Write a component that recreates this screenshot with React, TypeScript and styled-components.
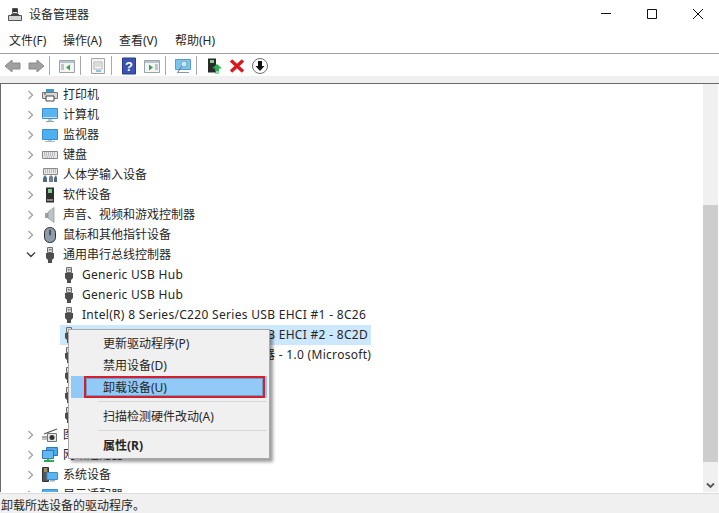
import React from "react";
import styled, { createGlobalStyle } from "styled-components";

const Global = createGlobalStyle`
  html, body { margin: 0; padding: 0; background: #fff; }
  body { font-family: "Noto Sans", "Noto Sans CJK SC", sans-serif; font-size: 12px; color: #262626; }
`;

const Win = styled.div`
  width: 719px; height: 513px; display: flex; flex-direction: column; overflow: hidden; background: #fff;
`;
const TitleBar = styled.div`
  height: 30px; flex: none; display: flex; align-items: center; padding-left: 7px;
`;
const TitleText = styled.span`
  margin-left: 6px; font-size: 12px; line-height: 16px; flex: 1;
`;
const Controls = styled.div`
  display: flex; margin-right: -2px; align-self: stretch;
`;
const Control = styled.div`
  width: 46px; display: flex; align-items: center; justify-content: center; padding-bottom: 2px;
`;
const MenuBar = styled.div`
  box-sizing: border-box; height: 24px; flex: none; border-bottom: 1px solid #a0a0a0; display: flex; align-items: center; padding-left: 9px; padding-bottom: 1px;
`;
const MenuLabel = styled.span`
  width: 56px; flex: none; line-height: 16px; white-space: nowrap; font-size: 12px;
  &:first-child { width: 54px; }
`;
const ToolBar = styled.div`
  height: 22px; flex: none; display: flex; align-items: center; padding-left: 1px; padding-top: 1px; box-sizing: border-box;
`;
const ToolBtn = styled.div`
  width: 23px; height: 21px; flex: none; display: flex; align-items: center; justify-content: center; padding-top: 1px; box-sizing: border-box;
`;
const ToolSep = styled.div`
  width: 8px; height: 19px; flex: none; box-sizing: border-box; padding-left: 2px;
  &::before { content: ""; display: block; width: 1px; height: 100%; background: #a8a8a8; }
`;
const Band = styled.div`
  height: 7px; flex: none; background: #f0f0f0;
`;
const Content = styled.div`
  position: relative; flex: none; height: 409px; display: flex; border-top: 1px solid #696969; border-left: 1px solid #696969; box-sizing: border-box;
`;
const Tree = styled.div`
  flex: 1; overflow: hidden; min-width: 0; padding-top: 1px;
`;
const Row = styled.div<{ $level: number }>`
  height: 20px; display: flex; align-items: center; white-space: nowrap;
  padding-left: ${p => (p.$level === 0 ? 23 : 59)}px;
`;
const Chevron = styled.span`
  width: 14px; height: 14px; flex: none; display: flex; align-items: center; justify-content: center; margin-right: 3px;
`;
const RowBody = styled.div<{ $selected?: boolean }>`
  display: flex; align-items: center; height: 20px;
  background: ${p => (p.$selected ? "#cce8ff" : "transparent")};
  padding-right: 3px;
`;
const IconBox = styled.span`
  width: 18px; height: 16px; flex: none; display: flex; align-items: center; justify-content: center; margin-right: 4px;
`;
const RowText = styled.span`
  font-size: 12px; letter-spacing: 0.3px; line-height: 16px;
`;
const CjkText = styled.span`
  font-size: 12px; line-height: 16px;
`;
const Scroll = styled.div`
  width: 15px; margin-right: 1px; flex: none; background: #f0f0f0; display: flex; flex-direction: column;
`;
const ScrollTrack = styled.div`
  height: 121px; flex: none;
`;
const Thumb = styled.div`
  height: 257px; flex: none; background: #cdcdcd;
`;
const ScrollEnd = styled.div`
  flex: 1; display: flex; align-items: flex-end; justify-content: center; padding-bottom: 3px;
`;
const Status = styled.div`
  flex: 1; background: #f0f0f0; border-top: 1px solid #dcdcdc; box-sizing: border-box; padding-left: 1px; padding-top: 4px; line-height: 16px; font-size: 12px; margin-top: 1px;
`;
const CtxMenu = styled.div`
  position: absolute; left: 67px; top: 245px; width: 202px; box-sizing: border-box; padding: 2px;
  background: #f0f0f0; border: 1px solid #a8a8a8; box-shadow: 3px 3px 3px rgba(0,0,0,.38);
`;
const CtxItem = styled.div<{ $active?: boolean; $bold?: boolean }>`
  position: relative; height: 22px; display: flex; align-items: center; padding-left: 32px;
  font-size: 12px; white-space: nowrap; font-weight: ${p => (p.$bold ? 700 : 400)};
  background: ${p => (p.$active ? "#91c9f7" : "transparent")};
`;
const CtxSep = styled.div`
  height: 7px; margin-left: 27px; display: flex; align-items: center;
  &::before { content: ""; flex: 1; height: 1px; background: #d7d7d7; }
`;
const RedBox = styled.span`
  position: absolute; left: 13px; right: 2px; top: 0; bottom: 0; border: 2px solid #d2202f; outline: 1px solid rgba(90,110,150,.5); outline-offset: -3px;
`;

type IconKind = "printer" | "computer" | "monitor" | "keyboard" | "hid" | "software" | "sound" | "mouse" | "usb" | "camera" | "network" | "system";

const Ico: React.FC<{ kind: IconKind }> = ({ kind }) => {
  const p = { width: 16, height: 16, viewBox: "0 0 16 16" };
  switch (kind) {
    case "printer":
      return <svg {...p}><path d="M4 2h8v3H4z" fill="#3aa0c8"/><path d="M0.5 5.5h15v6h-15z" fill="#d8d8d8" stroke="#777"/><path d="M4 9h8v5H4z" fill="#fff" stroke="#444"/><path d="M2 7h2" stroke="#444"/></svg>;
    case "computer":
      return <svg {...p}><path d="M0.5 1.5h15v10h-15z" fill="#5ab4ef" stroke="#3d8fd0"/><path d="M1 10h14v1H1z" fill="#c8e6fa"/><path d="M6 12h4v2H6z" fill="#bcc8d0"/><path d="M4 14h8v1H4z" fill="#8fa0ac"/></svg>;
    case "monitor":
      return <svg {...p}><path d="M0.5 2.500h15v10h-15z" fill="#4fb0f0" stroke="#3a8fcf"/><path d="M6 13h4v1H6z" fill="#bcc8d0"/><path d="M3 14h10v1H3z" fill="#aab6c0"/></svg>;
    case "keyboard":
      return <svg {...p}><path d="M0.5 4.500h15v7h-15z" fill="#e8e8e8" stroke="#8a8a8a"/><path d="M2 6h12M2 8h12M3 10h10" stroke="#8c8c8c" strokeDasharray="1 1"/></svg>;
    case "hid":
      return <svg {...p}><path d="M1.5 1.500h14v6h-14z" fill="#e8e8e8" stroke="#8a8a8a"/><path d="M3 3h11M3 5h11" stroke="#8c8c8c" strokeDasharray="1 1"/><path d="M1 15v-4l2-3 2 3v4z" fill="#4f6a84"/><path d="M7 15v-5l2-2 2 2v5z" fill="#6d7f90"/><path d="M12 15v-4l2-3 1 3v4z" fill="#4f6a84"/></svg>;
    case "software":
      return <svg {...p}><path d="M4 0.500h8v15H4z" fill="#2f2f2f"/><path d="M6 2h4v4H6z" fill="#7fd28a"/><path d="M5 12h6v2H5z" fill="#8a8a8a"/></svg>;
    case "sound":
      return <svg {...p}><path d="M3 6h3v5H3z" fill="#9aa0a4"/><path d="M6 5l6-4.500v15L6 11z" fill="#bcc4c8" stroke="#8d9498" strokeWidth=".7"/></svg>;
    case "mouse":
      return <svg {...p}><rect x="2.500" y="0.500" width="11" height="15" rx="5.200" fill="#8f9cab" stroke="#2e2e2e"/><rect x="7" y="2.500" width="2" height="6" rx="1" fill="#46525f"/></svg>;
    case "usb":
      return <svg {...p}><path d="M5.500 0.500h5v5h-5z" fill="#d8d8d8" stroke="#6e6e6e"/><path d="M7 2h.8v1.500H7zM8.600 2h.8v1.500h-.8z" fill="#555"/><path d="M4 6h8v5l-2 2v3H6v-3l-2-2z" fill="#4d4d4d"/></svg>;
    case "camera":
      return <svg {...p}><path d="M0 10h5M2 7l13-5" stroke="#555" strokeWidth="1.200" fill="none"/><path d="M5.500 6.500h9v8h-9z" fill="#e6e6e6" stroke="#777"/><circle cx="10" cy="10.500" r="2.500" fill="#333"/><path d="M0 12h5" stroke="#888"/></svg>;
    case "network":
      return <svg {...p}><path d="M4.500 0.500h11v8h-11z" fill="#4fa8e8" stroke="#2f78b8"/><path d="M0.500 3.500h11v8h-11z" fill="#62b8f2" stroke="#2f78b8"/><path d="M2 14h10" stroke="#2fa84f" strokeWidth="2"/><path d="M6 11v3" stroke="#2fa84f" strokeWidth="2"/></svg>;
    case "system":
      return <svg {...p}><path d="M0.500 0.500h6v14h-6z" fill="#555" stroke="#333"/><path d="M2 2h3M2 4h3" stroke="#e8c070"/><path d="M5 5.500h10.500v7H5z" fill="#59b4f0" stroke="#3a8fcf"/><path d="M8 13h5v1.500H8z" fill="#9ab0c0"/></svg>;
  }
};

const ChevRight = () => (
  <svg width="8" height="10" viewBox="0 0 8 10"><path d="M1.500 1l4 4-4 4" fill="none" stroke="#a6a6a6" strokeWidth="1.400"/></svg>
);
const ChevDown = () => (
  <svg width="10" height="8" viewBox="0 0 10 8"><path d="M1 1.500l4 4 4-4" fill="none" stroke="#404040" strokeWidth="1.400"/></svg>
);

type Item = { kind: IconKind; text: string; level: number; open?: boolean; selected?: boolean; latin?: boolean };
const rows: Item[] = [
  { kind: "printer", text: "打印机", level: 0 },
  { kind: "computer", text: "计算机", level: 0 },
  { kind: "monitor", text: "监视器", level: 0 },
  { kind: "keyboard", text: "键盘", level: 0 },
  { kind: "hid", text: "人体学输入设备", level: 0 },
  { kind: "software", text: "软件设备", level: 0 },
  { kind: "sound", text: "声音、视频和游戏控制器", level: 0 },
  { kind: "mouse", text: "鼠标和其他指针设备", level: 0 },
  { kind: "usb", text: "通用串行总线控制器", level: 0, open: true },
  { kind: "usb", text: "Generic USB Hub", level: 1, latin: true },
  { kind: "usb", text: "Generic USB Hub", level: 1, latin: true },
  { kind: "usb", text: "Intel(R) 8 Series/C220 Series USB EHCI #1 - 8C26", level: 1, latin: true },
  { kind: "usb", text: "Intel(R) 8 Series/C220 Series USB EHCI #2 - 8C2D", level: 1, latin: true, selected: true },
  { kind: "usb", text: "Intel(R) USB 3.0 可扩展主机控制器 - 1.0 (Microsoft)", level: 1, latin: true },
  { kind: "usb", text: "USB Composite Device", level: 1, latin: true },
  { kind: "usb", text: "USB Root Hub", level: 1, latin: true },
  { kind: "usb", text: "USB Root Hub", level: 1, latin: true },
  { kind: "camera", text: "图像设备", level: 0 },
  { kind: "network", text: "网络适配器", level: 0 },
  { kind: "system", text: "系统设备", level: 0 },
  { kind: "monitor", text: "显示适配器", level: 0 },
];

const TI: React.FC<{ children: React.ReactNode }> = ({ children }) => (
  <ToolBtn><svg width="18" height="18" viewBox="0 0 18 18">{children}</svg></ToolBtn>
);

export default function App() {
  return (
    <Win>
      <Global />
      <TitleBar>
        <svg width="16" height="16" viewBox="0 0 16 16">
          <path d="M5.500 1.500h5v5h-5z" fill="#e0e0e0" stroke="#555"/>
          <path d="M6 2h4v3H6z" fill="#333"/>
          <path d="M1.500 8.500h13v5h-13z" fill="#d4d4d4" stroke="#555"/>
          <path d="M4 7h8v2H4z" fill="#444"/>
        </svg>
        <TitleText>设备管理器</TitleText>
        <Controls>
          <Control><svg width="10" height="10" viewBox="0 0 10 10"><path d="M0 4.500h10" stroke="#111"/></svg></Control>
          <Control><svg width="10" height="10" viewBox="0 0 10 10"><path d="M.5.500h9v9h-9z" fill="none" stroke="#111"/></svg></Control>
          <Control><svg width="10" height="10" viewBox="0 0 10 10"><path d="M0 0l10 10M10 0L0 10" stroke="#111" strokeWidth="1"/></svg></Control>
        </Controls>
      </TitleBar>
      <MenuBar>
        {["文件(F)", "操作(A)", "查看(V)", "帮助(H)"].map(m => <MenuLabel key={m}>{m}</MenuLabel>)}
      </MenuBar>
      <ToolBar>
        <TI><path d="M1 9l7-6v3h8v6H8v3z" fill="#a0a0a0" stroke="#8a8a8a"/></TI>
        <TI><path d="M17 9l-7-6v3H2v6h8v3z" fill="#a0a0a0" stroke="#8a8a8a"/></TI>
        <ToolSep />
        <TI>
          <path d="M1.500 3.500h15v12h-15z" fill="#f4f4f4" stroke="#98a4ac"/><path d="M2 4h14v2H2z" fill="#b8c4cc"/>
          <path d="M3 8h3M3 10h3M3 12h3" stroke="#8a96a0"/><path d="M12 7.500l-4 3 4 3z" fill="#3aa050"/>
        </TI>
        <ToolSep />
        <TI>
          <path d="M2.500 1.500h13v15h-13z" fill="#f4f4f4" stroke="#a4a4a4"/><path d="M5 5h8v7H5z" fill="#fff" stroke="#b0b0b0"/>
          <path d="M6 7h6M6 9h6" stroke="#b8b8b8"/><path d="M7 14h5" stroke="#8cc4dc" strokeWidth="2"/>
        </TI>
        <ToolSep />
        <TI>
          <path d="M2.500 1h13v16h-13z" fill="#3a52b0" stroke="#2a3c88"/>
          <text x="9" y="14" textAnchor="middle" fontSize="13" fontWeight="700" fill="#fff" fontFamily="Liberation Sans">?</text>
        </TI>
        <TI>
          <path d="M1.500 3.500h15v12h-15z" fill="#f4f4f4" stroke="#98a4ac"/><path d="M2 4h14v2H2z" fill="#b8c4cc"/>
          <path d="M12 8h3M12 10h3M12 12h3" stroke="#8a96a0"/><path d="M6 7.500l4 3-4 3z" fill="#3aa050"/>
        </TI>
        <ToolSep />
        <TI>
          <path d="M1.500 2.500h15v10h-15z" fill="#7cc4ec" stroke="#5c9cc8"/>
          <circle cx="10" cy="7" r="3" fill="#c8e8f8" stroke="#70a8c8"/><path d="M7.500 9.500L4 15" stroke="#607080"/><path d="M3 15.500h12" stroke="#8a98a4"/>
        </TI>
        <ToolSep />
        <TI>
          <path d="M3 1.500h8v14H3z" fill="#2a2a2a"/><path d="M5 3h4v3H5z" fill="#80d090"/>
          <path d="M12 7l5 4.500h-3v3h-4v-3H7z" fill="#28b050"/><path d="M10 16h4" stroke="#28b050"/>
        </TI>
        <TI><path d="M3 3.500l12 11M15 3.500l-12 11" stroke="#d81920" strokeWidth="3.400"/></TI>
        <TI>
          <circle cx="9" cy="9" r="7.500" fill="#fff" stroke="#707070"/>
          <path d="M7 4h4v5h2.500L9 14 4.500 9H7z" fill="#111"/>
        </TI>
      </ToolBar>
      <Band />
      <Content>
        <Tree>
          {rows.map((r, i) => (
            <Row key={i} $level={r.level}>
              {r.level === 0 && <Chevron>{r.open ? <ChevDown /> : <ChevRight />}</Chevron>}
              <RowBody $selected={r.selected}>
                <IconBox><Ico kind={r.kind} /></IconBox>
                {r.latin ? <RowText>{r.text}</RowText> : <CjkText>{r.text}</CjkText>}
              </RowBody>
            </Row>
          ))}
        </Tree>
        <Scroll>
          <ScrollTrack />
          <Thumb />
          <ScrollEnd>
            <svg width="9" height="7" viewBox="0 0 9 7"><path d="M1 1.500l3.500 3.500L8 1.500" fill="none" stroke="#555" strokeWidth="1.800"/></svg>
          </ScrollEnd>
        </Scroll>
        <CtxMenu>
          <CtxItem>更新驱动程序(P)</CtxItem>
          <CtxItem>禁用设备(D)</CtxItem>
          <CtxItem $active>卸载设备(U)<RedBox /></CtxItem>
          <CtxSep />
          <CtxItem>扫描检测硬件改动(A)</CtxItem>
          <CtxSep />
          <CtxItem $bold>属性(R)</CtxItem>
        </CtxMenu>
      </Content>
      <Status>卸载所选设备的驱动程序。</Status>
    </Win>
  );
}
